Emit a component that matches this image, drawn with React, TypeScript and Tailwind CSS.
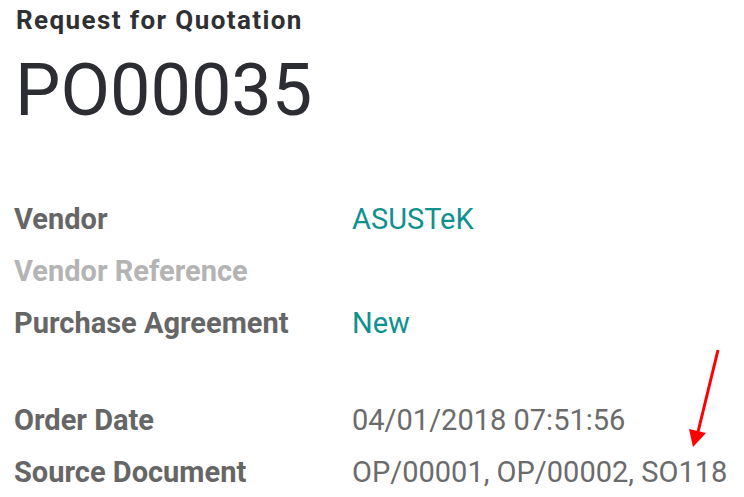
const Row = ({ label, value, labelClass, valueClass }: { label: string; value?: string; labelClass: string; valueClass?: string }) => (
  <div className="flex h-[52px] items-center leading-[52px]">
    <div className={`w-[338px] shrink-0 font-bold ${labelClass}`}>{label}</div>
    {value && <div className={valueClass}>{value}</div>}
  </div>
);

export default function App() {
  return (
    <div className="relative h-[497px] w-[744px] overflow-hidden bg-white pl-[14px] pt-[5px] font-['Roboto',sans-serif]">
      <h2 className="pl-[2px] text-[26px] font-bold leading-[30px] tracking-[1.4px] text-[#2f3033]">Request for Quotation</h2>
      <h1 className="mt-[20px] pl-[1px] text-[72px] font-normal leading-[72px] text-[#2c2d33]">PO00035</h1>

      <div className="mt-[66px] text-[29px]">
        <Row label="Vendor" value="ASUSTeK" labelClass="text-[#666666]" valueClass="text-[#0e918f]" />
        <Row label="Vendor Reference" labelClass="text-[#b4b4b4]" />
        <Row label="Purchase Agreement" value="New" labelClass="text-[#666666]" valueClass="text-[#0e918f]" />
      </div>

      <div className="mt-[45px] text-[29px]">
        <Row label="Order Date" value="04/01/2018 07:51:56" labelClass="text-[#666666]" valueClass="text-[#6b6b6b]" />
        <Row label="Source Document" value="OP/00001, OP/00002, SO118" labelClass="text-[#666666]" valueClass="text-[#6b6b6b]" />
      </div>

      <svg className="absolute left-0 top-0" width="744" height="497" viewBox="0 0 744 497">
        <line x1="718" y1="350" x2="698" y2="432" stroke="#ff0000" strokeWidth="3" />
        <polygon points="689,429 706,433 693,447" fill="#ff0000" />
      </svg>
    </div>
  );
}
